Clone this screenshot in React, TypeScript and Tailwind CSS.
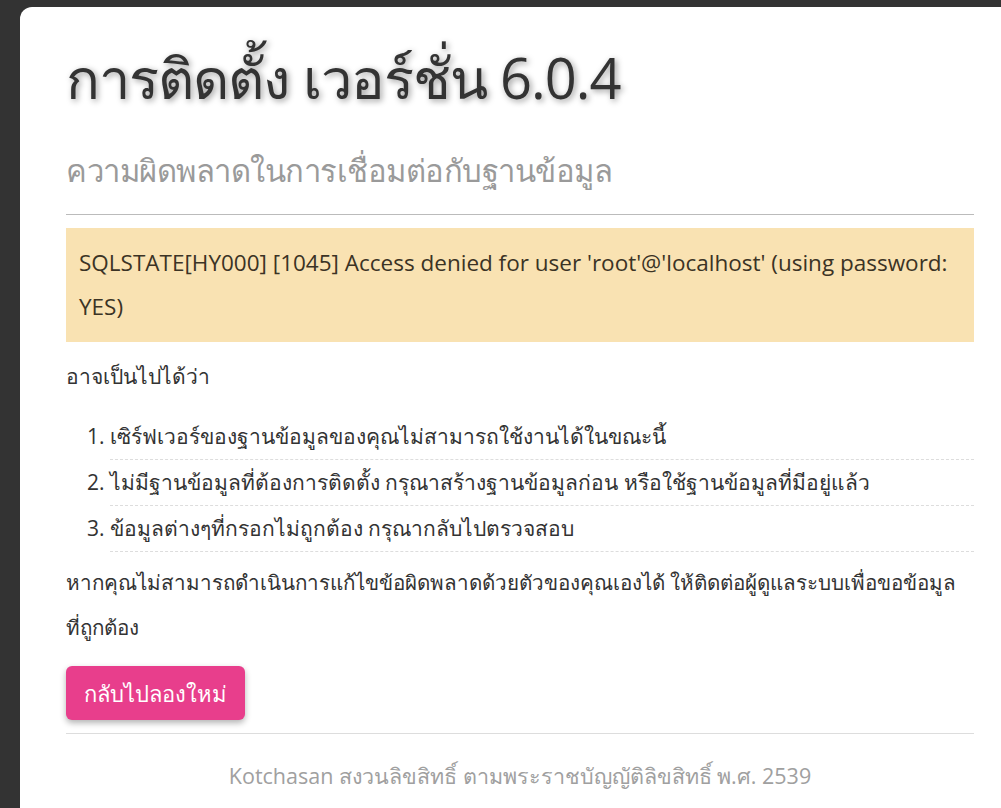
export default function App() {
  return (
    <div className="min-h-[808px] overflow-hidden bg-[#333333] pt-[7px] pl-5 font-['Open_Sans','Noto_Sans',sans-serif] text-[#333333]">
      <div className="w-[1000px] rounded-tl-xl rounded-tr-xl bg-white px-[46px] pt-[25px] pb-10">
        <h1 className="text-[56px] tracking-[-1px] leading-[90px] text-[#333] [text-shadow:2px_2px_6px_rgba(0,0,0,0.4)]">
          การติดตั้ง เวอร์ชั่น 6.0.4
        </h1>
        <h2 className="mt-[18px] pb-[14px] text-[31px] tracking-[-0.5px] leading-[60px] text-[#9a9a9a] border-b border-[#bbbbbb]">
          ความผิดพลาดในการเชื่อมต่อกับฐานข้อมูล
        </h2>
        <div className="mt-[13px] bg-[#f9e2b2] px-[13px] py-[13px] text-[22.5px] leading-[44px] text-[#3b3325]">
          SQLSTATE[HY000] [1045] Access denied for user 'root'@'localhost' (using password: YES)
        </div>
        <p className="mt-[12px] text-[21px] leading-[44px]">อาจเป็นไปได้ว่า</p>
        <ol className="mt-[16px] list-decimal pl-[44px] text-[21px] leading-[45px]">
          <li className="border-b border-dashed border-[#dddddd]">
            เซิร์ฟเวอร์ของฐานข้อมูลของคุณไม่สามารถใช้งานได้ในขณะนี้
          </li>
          <li className="border-b border-dashed border-[#dddddd]">
            ไม่มีฐานข้อมูลที่ต้องการติดตั้ง กรุณาสร้างฐานข้อมูลก่อน หรือใช้ฐานข้อมูลที่มีอยู่แล้ว
          </li>
          <li className="border-b border-dashed border-[#dddddd]">
            ข้อมูลต่างๆที่กรอกไม่ถูกต้อง กรุณากลับไปตรวจสอบ
          </li>
        </ol>
        <p className="mt-[8px] text-[20.6px] leading-[45px]">
          หากคุณไม่สามารถดำเนินการแก้ไขข้อผิดพลาดด้วยตัวของคุณเองได้ ให้ติดต่อผู้ดูแลระบบเพื่อขอข้อมูล ที่ถูกต้อง
        </p>
        <div className="mt-[16px] pb-[13px] border-b border-[#dddddd]">
          <button className="h-[54px] rounded-md bg-[#e83e8c] px-[18px] text-[22px] text-white shadow-[0_3px_6px_rgba(0,0,0,0.3)]">
            กลับไปลองใหม่
          </button>
        </div>
        <p className="mt-[20px] text-center text-[21.5px] leading-[44px] text-[#a0a0a0]">
          Kotchasan สงวนลิขสิทธิ์ ตามพระราชบัญญัติลิขสิทธิ์ พ.ศ. 2539
        </p>
      </div>
    </div>
  );
}
